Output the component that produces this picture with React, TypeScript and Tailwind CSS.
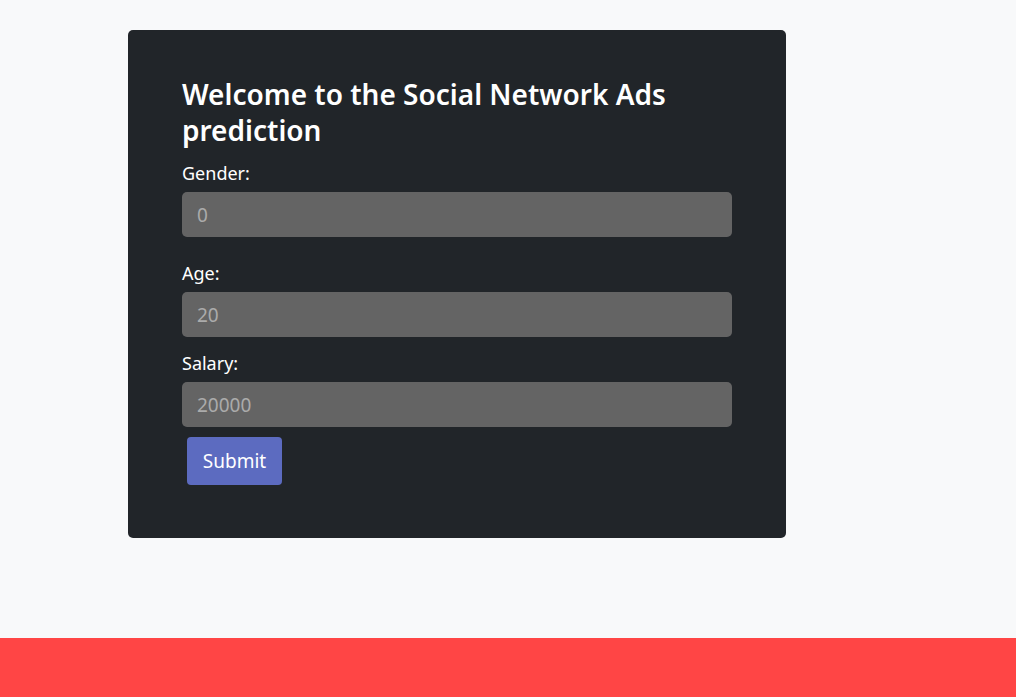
import { useState } from 'react';

const App: React.FC = () => {
    const [gender, setGender] = useState('');
    const [age, setAge] = useState('');
    const [salary, setSalary] = useState('');

    const handleSubmit = (e: any) => {
        e.preventDefault();
    };

    return (
        <div className="min-h-[697px] bg-[#f8f9fa] flex flex-col" style={{ fontFamily: '"Noto Sans", "Open Sans", sans-serif' }}>
            <div className="flex-1 pt-[30px] pl-[128px]">
                <form onSubmit={handleSubmit} className="w-[658px] h-[508px] bg-[#212529] rounded-[5px] pt-[46px] px-[54px]">
                    <h1 className="text-[28px] leading-[36px] font-semibold text-white mb-[12px]">
                        Welcome to the Social Network Ads prediction
                    </h1>

                    <div className="mb-[23px]">
                        <label htmlFor="gender" className="block text-[18px] leading-[27px] text-white mb-[5px]">Gender:</label>
                        <input
                            type="text"
                            id="gender"
                            value={gender}
                            onChange={(e) => setGender(e.target.value)}
                            className="w-full h-[45px] bg-[#646464] rounded-[5px] px-[15px] text-[19px] text-white placeholder:text-[#ababab] outline-none"
                            placeholder="0"
                        />
                    </div>

                    <div className="mb-[13px]">
                        <label htmlFor="age" className="block text-[18px] leading-[27px] text-white mb-[5px]">Age:</label>
                        <input
                            type="text"
                            id="age"
                            value={age}
                            onChange={(e) => setAge(e.target.value)}
                            className="w-full h-[45px] bg-[#646464] rounded-[5px] px-[15px] text-[19px] text-white placeholder:text-[#ababab] outline-none"
                            placeholder="20"
                        />
                    </div>

                    <div>
                        <label htmlFor="salary" className="block text-[18px] leading-[27px] text-white mb-[5px]">Salary:</label>
                        <input
                            type="text"
                            id="salary"
                            value={salary}
                            onChange={(e) => setSalary(e.target.value)}
                            className="w-full h-[45px] bg-[#646464] rounded-[5px] px-[15px] text-[19px] text-white placeholder:text-[#ababab] outline-none"
                            placeholder="20000"
                        />
                    </div>

                    <button
                        type="submit"
                        className="block mt-[10px] ml-[5px] w-[95px] h-[48px] bg-[#5c6bc0] text-white text-[19px] rounded-[4px]"
                    >
                        Submit
                    </button>
                </form>
            </div>
            <div className="h-[59px] bg-[#ff4545]"></div>
        </div>
    );
};

export default App;
